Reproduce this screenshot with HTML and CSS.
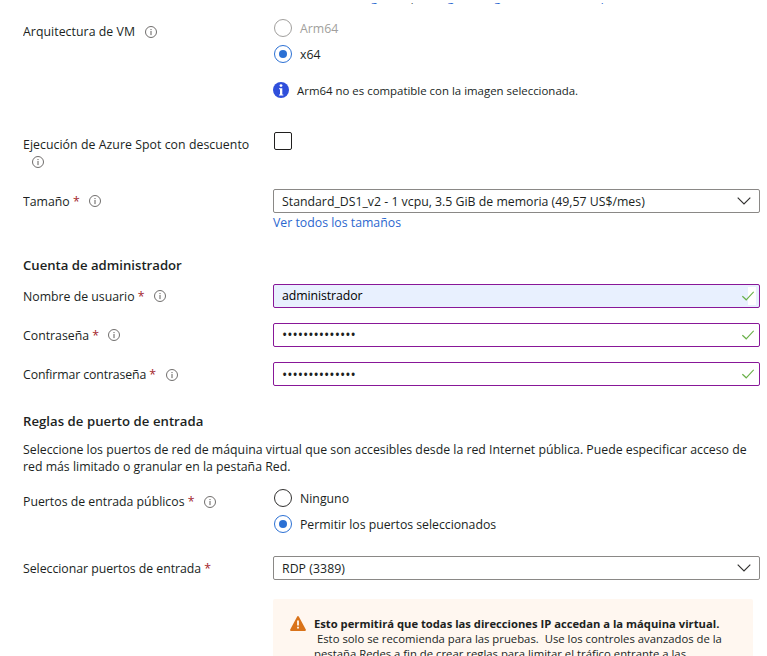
FILE: index.html
```html
<!DOCTYPE html>
<html lang="es">
<head>
<meta charset="utf-8">
<title>Crear una máquina virtual</title>
<link rel="stylesheet" href="styles.css">
</head>
<body>
<svg class="defs" width="0" height="0" aria-hidden="true">
  <symbol id="info" viewBox="0 0 12 12"><circle cx="6" cy="6" r="5.5" fill="none" stroke="#605e5c" stroke-width=".9"/><path d="M6 5v4.1M6 3v1.1" stroke="#605e5c" stroke-width="1"/></symbol>
  <symbol id="chevron" viewBox="0 0 14 8"><path d="M.7.7 7 7 13.3.7" fill="none" stroke="#323130" stroke-width="1.15"/></symbol>
  <symbol id="check" viewBox="0 0 12 10"><path d="M.4 5.2 4.2 8.8 11.7.8" fill="none" stroke="#6bb14a" stroke-width="1.2"/></symbol>
</svg>
<main class="form">
  <div class="image-links"><a>Ver todas las imágenes</a><span>|</span><a class="generation">Configurar la generación de máquinas virtuales</a></div>

  <div class="row row-arch">
    <div class="label loose">Arquitectura de VM<svg class="info"><use href="#info"/></svg></div>
    <div>
      <div class="radio disabled"><i class="dot"></i><span>Arm64</span></div>
      <div class="radio checked"><i class="dot"></i><span>x64</span></div>
      <div class="note">
        <svg width="16" height="16" viewBox="0 0 16 16"><circle cx="8" cy="8" r="8" fill="#2f4fdb"/><circle cx="8" cy="3.6" r="1.4" fill="#fff"/><path d="M6 6.2h3.3v6.2h1v1H6v-1h1V7.2H6z" fill="#fff"/></svg>
        <span>Arm64 no es compatible con la imagen seleccionada.</span>
      </div>
    </div>
  </div>

  <div class="row row-spot">
    <div class="label loose">Ejecución de Azure Spot con descuento <svg class="info"><use href="#info"/></svg></div>
    <div><i class="checkbox"></i></div>
  </div>

  <div class="row row-size">
    <div class="label required raised">Tamaño <b>*</b><svg class="info"><use href="#info"/></svg></div>
    <div>
      <div class="field select"><span>Standard_DS1_v2 - 1 vcpu, 3.5 GiB de memoria (49,57 US$/mes)</span><svg class="chevron"><use href="#chevron"/></svg></div>
      <a class="all-sizes">Ver todos los tamaños</a>
    </div>
  </div>

  <h2 class="heading-admin">Cuenta de administrador</h2>
  <div class="row row-input">
    <div class="label required raised">Nombre de usuario <b>*</b><svg class="info"><use href="#info"/></svg></div>
    <div class="field valid autofill"><span>administrador</span><i class="patch"><svg class="check"><use href="#check"/></svg></i></div>
  </div>
  <div class="row row-input">
    <div class="label required raised">Contraseña <b>*</b><svg class="info"><use href="#info"/></svg></div>
    <div class="field valid"><span class="secret">••••••••••••••</span><svg class="check"><use href="#check"/></svg></div>
  </div>
  <div class="row row-input">
    <div class="label tight">Confirmar contraseña <b>*</b><svg class="info"><use href="#info"/></svg></div>
    <div class="field valid"><span class="secret confirm">••••••••••••••</span><svg class="check"><use href="#check"/></svg></div>
  </div>

  <h2 class="heading-ports">Reglas de puerto de entrada</h2>
  <p class="intro">Seleccione los puertos de red de máquina virtual que son accesibles desde la red Internet pública. Puede especificar acceso de<br>red más limitado o granular en la pestaña Red.</p>

  <div class="row row-public">
    <div class="label required">Puertos de entrada públicos <b>*</b><svg class="info"><use href="#info"/></svg></div>
    <div>
      <div class="radio"><i class="dot"></i><span>Ninguno</span></div>
      <div class="radio checked"><i class="dot"></i><span class="snug">Permitir los puertos seleccionados</span></div>
    </div>
  </div>
  <div class="row row-select">
    <div class="label snug">Seleccionar puertos de entrada <b>*</b></div>
    <div class="field select"><span class="loose">RDP (3389)</span><svg class="chevron"><use href="#chevron"/></svg></div>
  </div>

  <div class="warning">
    <svg width="16" height="15" viewBox="0 0 16 15"><path d="M8 1 15 14H1Z" fill="#d9731a" stroke="#d9731a" stroke-width="1.8" stroke-linejoin="round"/><path d="M8 4.5v5M8 10.8v1.7" stroke="#fff" stroke-width="1.7"/></svg>
    <div><strong>Esto permitirá que todas las direcciones IP accedan a la máquina virtual.</strong><br>&nbsp;Esto solo se recomienda para las pruebas.&nbsp; Use los controles avanzados de la<br>pestaña Redes a fin de crear reglas para limitar el tráfico entrante a las</div>
  </div>
</main>
</body>
</html>
```
FILE: styles.css
```css
* { box-sizing: border-box; }
html, body { height: 100%; margin: 0; overflow: hidden; }
body { background: #fff; color: #201f1e; font: 12.3px/18px "Open Sans", "Noto Sans", sans-serif; }
.defs { display: none; }
.form { width: 737px; margin-left: 23px; height: 656px; overflow: hidden; }
a { color: #2b67cf; }

.image-links { display: flex; height: 2px; margin: 3px 0 14px 250px; overflow: hidden; white-space: nowrap; }
.image-links > * { height: 18px; margin-top: -15px; }
.image-links span { margin-left: 4px; width: 9px; color: #323130; }
.generation { letter-spacing: -.06px; }

.row { display: grid; grid-template-columns: 250px 487px; white-space: nowrap; }
.label { padding-top: 4px; }
.label b { color: #a4262c; font-weight: 400; }
.info { display: inline-block; width: 12px; height: 12px; margin-left: 10px; vertical-align: -2px; }
.required .info { margin-left: 9px; }
.raised .info { vertical-align: -1px; }
.tight { letter-spacing: -.12px; }
.snug { letter-spacing: -.03px; }
.loose { letter-spacing: .05px; }

.row-arch { height: 113px; }
.row-spot { height: 57px; }
.row-spot .label { width: 240px; line-height: 17px; white-space: normal; }
.row-spot .info { margin-left: 9px; }
.row-size { height: 67px; }
.row-input { height: 24px; margin-bottom: 15px; }
.row-public { height: 67px; }
.row-select { height: 24px; }

.radio { display: flex; align-items: center; gap: 8px; height: 18px; margin: 0 0 8px 1px; }
.radio span { padding-top: 2px; }
.dot { display: grid; place-items: center; width: 18px; height: 18px; border: 1px solid #323130; border-radius: 50%; }
.checked .dot { border-color: #2b70d4; }
.checked .dot::after { content: ""; width: 8px; height: 8px; border-radius: 50%; background: #2b70d4; }
.disabled { color: #a19f9d; }
.disabled .dot { border-color: #a19f9d; }

.note { display: flex; gap: 8px; height: 16px; margin-top: 19px; font-size: 11.43px; }
.checkbox { display: block; width: 18px; height: 18px; margin-left: 1px; border: 1px solid #201f1e; border-radius: 2px; }

.field { display: flex; align-items: center; justify-content: space-between; height: 24px; padding: 0 8px; border: 1px solid #8a8886; border-radius: 2px; }
.select span { padding-top: 2px; }
.valid { padding-right: 5px; border-color: #881798; color: #000; }
.autofill { padding-right: 3px; background: #e8f0fe; }
.autofill > span { letter-spacing: -.08px; }
.patch { display: flex; align-items: center; width: 14px; height: 18px; background: linear-gradient(to right, #e8f0fe 6px, #fff 6px); }
.chevron { width: 14px; height: 8px; }
.check { width: 12px; height: 10px; }
.secret { font-size: 14px; color: #201f1e; }
.confirm { padding-top: 2px; }
.all-sizes { display: block; padding-top: 1px; }

h2 { margin: 0; height: 18px; font-size: 13.15px; font-weight: 600; line-height: 18px; }
.heading-admin { margin-bottom: 10px; }
.heading-ports { margin-top: 26px; letter-spacing: .04px; }
.intro { margin: 11px 0 13px; height: 35px; line-height: 17px; white-space: nowrap; }

.warning { display: flex; gap: 8px; width: 480px; height: 80px; margin: 19px 0 0 250px; padding: 17px 0 0 17px; border-radius: 2px; background: #fff7f0; font-size: 11.32px; line-height: 15px; white-space: nowrap; }
.warning strong { font-size: 11.23px; font-weight: 700; }
```
